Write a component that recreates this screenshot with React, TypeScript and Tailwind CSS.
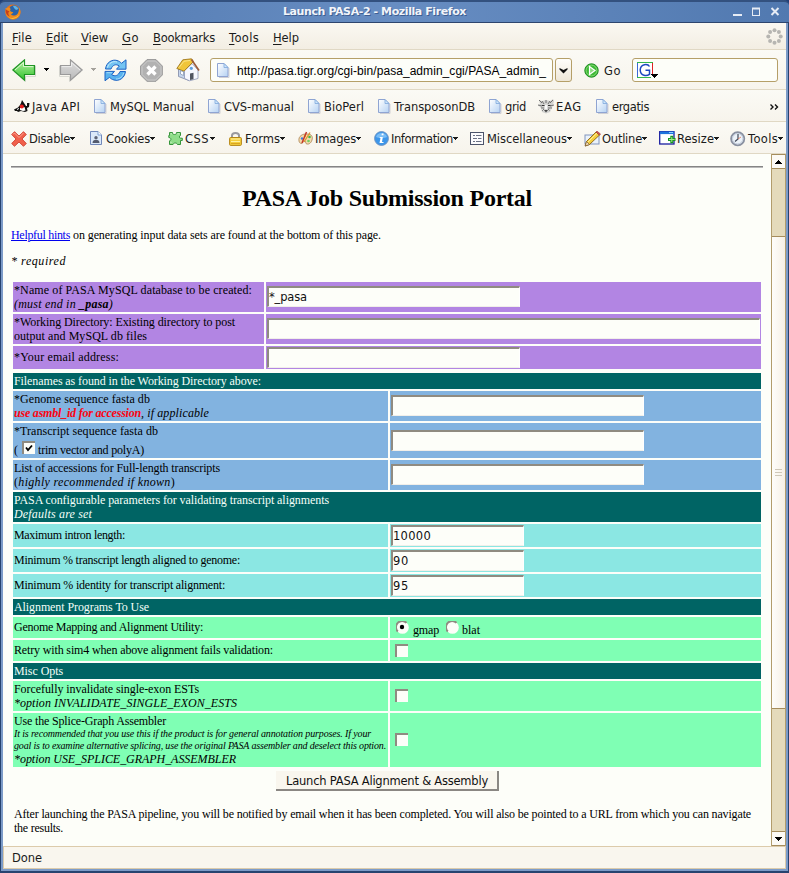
import { useLayoutEffect, useRef, type ReactNode } from "react";

/* Text set to the width of its box: the letter spacing is measured after layout. */
function Fit({ className = "", textClass = "", children }: { className?: string; textClass?: string; children: ReactNode }) {
  const box = useRef<HTMLSpanElement>(null);
  const text = useRef<HTMLSpanElement>(null);
  useLayoutEffect(() => {
    const b = box.current;
    const t = text.current;
    if (!b || !t) return;
    t.style.letterSpacing = "0px";
    const n = Math.max(1, (t.textContent || "").length);
    const gap = (b.getBoundingClientRect().width - t.getBoundingClientRect().width) / n;
    t.style.letterSpacing = `${gap}px`;
  }, []);
  return (
    <span ref={box} className={`block shrink-0 whitespace-pre ${className}`}>
      <span ref={text} className={`inline-block whitespace-pre ${textClass}`}>{children}</span>
    </span>
  );
}

const Arrow = ({ className = "" }: { className?: string }) => (
  <svg className={`h-[4px] w-[6px] shrink-0 ${className}`} viewBox="0 0 6 4" shapeRendering="crispEdges">
    <path d="M0 0H5V1H4V2H3V3H2V2H1V1H0Z" fill="currentColor" />
  </svg>
);

const PageIcon = ({ className = "" }: { className?: string }) => (
  <svg className={`h-[15px] w-[13px] shrink-0 ${className}`} viewBox="0 0 13 15">
    <defs>
      <linearGradient id="pg" x1="0" y1="0" x2="1" y2="1">
        <stop offset="0" stopColor="#fff" />
        <stop offset="1" stopColor="#b5d2f3" />
      </linearGradient>
    </defs>
    <path d="M2 14.5H12V5" stroke="#cfcfd4" fill="none" />
    <path d="M.5.5H7L11 4.5V13.5H.5Z" fill="url(#pg)" stroke="#8fa4d2" />
    <path d="M7 .5V4.5H11Z" fill="#cfe6fb" stroke="#7fa8dc" strokeWidth=".8" />
  </svg>
);

const FirefoxIcon = () => (
  <svg className="h-4 w-4 shrink-0" viewBox="0 0 16 16">
    <circle cx="8" cy="8" r="7.6" fill="#e8731a" />
    <circle cx="9" cy="6.5" r="5.2" fill="#2a63a8" />
    <path d="M8 2C10 1.2 13 3 13.5 5L11 6 9 4Z" fill="#5fb3e6" />
    <path d="M.6 4C1.8 4.6 3 3.2 4.2 3.6 5.5 4 6 5.5 5 6.5 5.4 7.8 7 8 8.3 8.2 7.4 10 5.5 10.2 6.4 11 9.5 12.8 13 11 13.6 7.5L14.3 3.8C16.5 7.5 15.6 13 10.6 15 5.5 16.4.6 13 .4 8Z" fill="#ee8a1d" />
    <path d="M3 12.5C6 15 11 14.6 14 10.5 12.5 14.5 6.8 16.5 3 12.5Z" fill="#fbd34a" />
    <path d="M.8 5C1.8 6.5 3 7 4.5 7 2.8 8.5 3 11 5 12.5 1 11.5.4 8 .8 5Z" fill="#c8401a" />
  </svg>
);

const BigArrow = ({ green }: { green: boolean }) => (
  <svg className={green ? "h-[23px] w-[24px] shrink-0" : "h-[23px] w-[24px] shrink-0 -scale-x-100"} viewBox="0 0 24 23">
    <defs>
      <linearGradient id="gr" x1="0" y1="0" x2="0" y2="1">
        <stop offset="0" stopColor="#b9f0a4" />
        <stop offset="1" stopColor="#2fc32a" />
      </linearGradient>
      <linearGradient id="gy" x1="0" y1="0" x2="0" y2="1">
        <stop offset="0" stopColor="#dedede" />
        <stop offset="1" stopColor="#b9b9b9" />
      </linearGradient>
    </defs>
    <path d="M2 12.5 13.5 22.5V17.5H23.5V7" fill="none" stroke="#d9d9d2" />
    <path d="M.8 11 12.5.9V6.5H22.5V15.5H12.5V21.1Z" fill={green ? "url(#gr)" : "url(#gy)"} stroke={green ? "#1f9424" : "#9a9a9a"} strokeWidth="1.2" />
    <path d="M3 11 11.5 3.5V7.6H21.3" fill="none" stroke={green ? "#dcf8cf" : "#ededed"} />
  </svg>
);

const ReloadIcon = () => (
  <svg className="h-[23px] w-[23px] shrink-0" viewBox="0 0 23 23">
    <path d="M1.5 10C2.2 3.500 8 0 13 1.500 15 2.100 16.500 3 17.500 4.300L22 .8V10.200H12.500L15.300 7C12 4.500 8.500 6 7 10Z" fill="#74c4f2" stroke="#1d63c4" />
    <path d="M21.5 12.500C20.800 19 15 22.500 10 21 8 20.400 6.500 19.600 5.500 18.300L1 21.800V12.400H10.500L7.700 15.600C11 18 14.500 16.500 16 12.500Z" fill="#58b2ee" stroke="#1d63c4" />
    <path d="M3.500 8.500C4.500 4 9 1.800 13 3" fill="none" stroke="#c8edff" />
    <path d="M2.500 13.700H8M12 20C16 20 19 17.500 19.600 13.800" fill="none" stroke="#a8ddfb" />
  </svg>
);

const StopIcon = () => (
  <svg className="h-[23px] w-[23px] shrink-0" viewBox="0 0 23 23">
    <path d="M7 .6H16L22.300 7V16L16 22.300H7L.6 16V7Z" fill="#b2b2b2" stroke="#989898" />
    <path d="M7.500 2H15.500L21 7.500V15.500L15.500 21H7.500L2 15.500V7.500Z" fill="none" stroke="#cbcbcb" />
    <path d="M7.500 7.500 15.500 15.500M15.500 7.500 7.500 15.500" stroke="#fff" strokeWidth="3.400" />
  </svg>
);

const HomeIcon = () => (
  <svg className="h-[24px] w-[24px] shrink-0" viewBox="0 0 24 24">
    <path d="M2.500 11 9 4 15 20.500 13 22.500 2.500 18.500Z" fill="#c6d5ec" stroke="#7d88a4" strokeWidth=".8" />
    <path d="M8.500 12.500 16 5.500 22 12V20.500L13.500 22.800 8.500 20.500Z" fill="#f6f7fd" stroke="#8c94b4" strokeWidth=".8" />
    <path d="M.8 10.500 6.800 1.800 15.500.8 17.500 3.500 8 13.200Z" fill="#f0c53a" stroke="#966c12" strokeWidth=".8" />
    <path d="M15.500 1.500 23 12.500" stroke="#9b5a3a" strokeWidth="1.600" />
    <path d="M3 9.500 8 3.200 14 2.500" fill="none" stroke="#fbe588" />
    <path d="M14 22V15.500L17.500 14.800V21.300Z" fill="#50545f" />
    <circle cx="15.300" cy="10.300" r="1.600" fill="#5fa0de" />
    <path d="M4.500 16V12.500L7.500 14V17.500Z" fill="#fff" stroke="#7c90b0" strokeWidth=".7" />
  </svg>
);

const GoIcon = () => (
  <svg className="h-[15px] w-[15px] shrink-0" viewBox="0 0 15 15">
    <circle cx="7.500" cy="7.500" r="6.700" fill="#3fba37" stroke="#1e8a22" />
    <circle cx="7.500" cy="7.500" r="5.400" fill="none" stroke="#8fe07d" strokeWidth=".8" />
    <path d="M5.500 3.500 11 7.500 5.500 11.500Z" fill="#8ed880" stroke="#fff" strokeWidth="1.200" />
  </svg>
);

const GoogleIcon = () => (
  <svg className="h-[18px] w-[22px] shrink-0" viewBox="0 0 22 18">
    <rect x="1" y="1" width="14" height="15" fill="#fff" />
    <path d="M.5 16V1" fill="none" stroke="#3c69d6" />
    <path d="M0 1.500H16" stroke="#35b84b" />
    <path d="M15.500 2V13" stroke="#e02222" />
    <path d="M0 16.500H14" stroke="#35b84b" />
    <path d="M12.500 5.500C11 2.800 3.500 2.300 3.200 9 3.500 15.500 10 15 12.500 13.300V9.300H8.500" fill="none" stroke="#1c48c0" strokeWidth="1.500" />
    <path d="M14 13H21V14H20V15H19V16H18V17H17V16H16V15H15V14H14Z" fill="#000" />
  </svg>
);

const DukeIcon = () => (
  <svg className="h-[14px] w-[16px] shrink-0" viewBox="0 0 16 14">
    <path d="M8 0 10 3 12 6 13 6 13 3 15.500 3 15 7 13 8 13.500 11 11 12 7 11 4 12 3 11H1L0 9.500 4 7.500 6 5 7 3Z" fill="#111" />
    <path d="M6 8 10.500 7 11.500 10.500 9 11 6 10Z" fill="#fff" />
    <circle cx="7.800" cy="6.500" r="2" fill="#e81e1e" />
    <path d="M3 9.500 5 8.500" stroke="#fff" />
  </svg>
);

const TigerIcon = () => (
  <svg className="h-[15px] w-[17px] shrink-0" viewBox="0 0 17 15">
    <path d="M1 1 4 2 8 1 12 2 15 0 16 2 15 6 14 9 12 13 8 14.500 4 13 3 9 0 6 2 5Z" fill="#d2d2d0" />
    <path d="M1 1 4 4M4 2 6 5M8 1V4M12 2 10 5M15 1 12 4M0 6 4 7M16 6 12 7M3 9 6 9M14 9 10 9M4 12 6 10M12 12 10 10" stroke="#666" strokeWidth=".9" />
    <path d="M6 11H10L8 13.500Z" fill="#444" />
    <path d="M7 6 9 6 9 10H7ZM4 9.500 5.500 12M11.500 12 12.800 9.500" fill="#fff" stroke="#eee" strokeWidth=".5" />
    <path d="M4 6.500H6.500M10 6.500H12.500" stroke="#333" />
  </svg>
);

const DisableIcon = () => (
  <svg className="h-[16px] w-[16px] shrink-0" viewBox="0 0 16 16">
    <path d="M3.500.7 8 5 12.500.7 15.300 3.500 11 8 15.300 12.500 12.500 15.300 8 11 3.500 15.300.7 12.500 5 8 .7 3.500Z" fill="#f0604c" stroke="#cf4031" strokeWidth=".9" />
    <path d="M2 3.500 3.500 2 8 6.500 12.500 2" fill="none" stroke="#fca493" />
  </svg>
);

const CookieIcon = () => (
  <svg className="h-[15px] w-[13px] shrink-0" viewBox="0 0 13 15">
    <path d="M.5.5H8L11.500 4V13.500H.5Z" fill="#dce9f9" stroke="#7188ba" />
    <path d="M8 .5V4H11.500" fill="#fff" stroke="#7fa0d0" />
    <circle cx="6" cy="6.800" r="1.700" fill="#5d6375" />
    <path d="M2.500 12C2.500 9.500 4 9 6 9S9.500 9.500 9.500 12Z" fill="#545b6e" />
  </svg>
);

const PuzzleIcon = () => (
  <svg className="h-[15px] w-[15px] shrink-0" viewBox="0 0 15 15">
    <path d="M1.500 1.500H4.500C4.500 3 5 3.500 6.500 3.500S8.500 3 8.500 1.500H12.500V4.500C11 4.800 11 7 12.500 7.200H14.300V9.500H12.500V13.500H9.500C9 11.500 5.500 11.500 5 13.500H1.500V9.800C3.500 9.800 3.500 6.500.8 6.500V4.500H1.500Z" fill="#8fdd8a" stroke="#35943a" />
    <path d="M2.700 2.800H4M9.500 2.800H11.500M3 12V10.800" stroke="#cdf5c7" />
  </svg>
);

const LockIcon = () => (
  <svg className="h-[15px] w-[13px] shrink-0" viewBox="0 0 13 15">
    <path d="M3 7V4.500C3 1 10 1 10 4.500V7" fill="none" stroke="#9a9a9e" strokeWidth="2" />
    <rect x=".6" y="6.500" width="11.800" height="7.900" rx="1" fill="#f4cf3d" stroke="#b58616" />
    <path d="M2 8H11M2 10.500H11" stroke="#fff2a4" />
    <path d="M2 12.500H11" stroke="#dba521" />
  </svg>
);

const PaletteIcon = () => (
  <svg className="h-[15px] w-[15px] shrink-0" viewBox="0 0 15 15">
    <path d="M1 10C0 5 5 2.500 9 3 14 3 15 6 14 9 13 12.500 10 14 8 12.500 7 11.500 8.500 10.500 7 10 5 9.500 5 13 3 12.500 2 12 1.200 11.500 1 10Z" fill="#f4dcae" stroke="#aa8152" strokeWidth=".8" />
    <circle cx="4" cy="7.500" r="1.200" fill="#3b7be0" />
    <circle cx="7" cy="5" r="1.200" fill="#e4cf30" />
    <circle cx="11.500" cy="6" r="1.300" fill="#43b547" />
    <circle cx="10.500" cy="10" r="1.300" fill="#6fcf60" />
    <path d="M4 12 8.500 1" stroke="#c5352a" strokeWidth="1.500" />
    <path d="M6 11 12 1.500" stroke="#db9830" strokeWidth="1.300" />
  </svg>
);

const InfoIcon = () => (
  <svg className="h-[15px] w-[15px] shrink-0" viewBox="0 0 15 15">
    <circle cx="7.500" cy="7.500" r="6.900" fill="#3c96ea" stroke="#6d94c4" />
    <path d="M2 6C3 .8 12 .8 13 6 10 7.500 5 7.500 2 6Z" fill="#79bdf6" />
    <path d="M7.800 2.500H9.500V4.300H7.500ZM6 6H8.800L8 11H9.500V12H5.500L6.500 7H5.500Z" fill="#fff" />
  </svg>
);

const MiscIcon = () => (
  <svg className="h-[14px] w-[15px] shrink-0" viewBox="0 0 15 14">
    <rect x=".5" y=".5" width="13" height="12" fill="#fbfbfd" stroke="#4b536a" />
    <path d="M3 3.500H5M6 3.500H11.500M3 6.500H7M8 6.500H11.500M3 9.500H5M6 9.500H11.500" stroke="#6a7084" />
  </svg>
);

const OutlineIcon = () => (
  <svg className="h-[16px] w-[17px] shrink-0" viewBox="0 0 17 16">
    <rect x="1" y="4" width="14" height="9" fill="#eaf2fb" stroke="#8195bd" />
    <path d="M1.200 15 2.500 10.500 12 1 15.500 4 5.500 13.500Z" fill="#f4ce3d" stroke="#8a6113" strokeWidth=".9" />
    <path d="M1.200 15 2.500 10.500 5.500 13.500Z" fill="#f7dfba" stroke="#76582e" strokeWidth=".7" />
    <path d="M12 1 13 .2 16.500 3 15.500 4Z" fill="#df5a55" stroke="#a23434" strokeWidth=".7" />
    <path d="M4 11 13 2.200" stroke="#fff0a0" />
  </svg>
);

const ResizeIcon = () => (
  <svg className="h-[15px] w-[17px] shrink-0" viewBox="0 0 17 15">
    <rect x=".7" y=".7" width="14.300" height="12.300" fill="#fff" stroke="#1a1ea0" strokeWidth="1.300" />
    <path d="M1 1.800H15" stroke="#1e73dc" strokeWidth="2.600" />
    <path d="M10 1.500H14" stroke="#8ad0ff" />
    <path d="M9 8.500H16.500M12.800 4.800V12.300" stroke="#189522" strokeWidth="3" />
    <path d="M10 8.500H15.500M12.800 6V11" stroke="#a6eb8b" strokeWidth="1" />
  </svg>
);

const ClockIcon = () => (
  <svg className="h-[16px] w-[16px] shrink-0" viewBox="0 0 16 16">
    <circle cx="7.700" cy="7.700" r="6.600" fill="#edf3f9" stroke="#8990a0" strokeWidth="1.800" />
    <circle cx="7.700" cy="7.700" r="5.200" fill="none" stroke="#b8c1d3" strokeWidth=".8" />
    <path d="M8 3V8L5 10.500" fill="none" stroke="#414957" strokeWidth="1.200" />
    <path d="M8 8 11 6" stroke="#e07050" strokeWidth=".8" />
  </svg>
);

const Throbber = () => (
  <svg className="h-[17px] w-[17px] shrink-0" viewBox="0 0 17 17" fill="#b6b5b1">
    <circle cx="8.500" cy="2.300" r="2" />
    <circle cx="12.900" cy="4.100" r="2" />
    <circle cx="14.700" cy="8.500" r="2" />
    <circle cx="12.900" cy="12.900" r="2" />
    <circle cx="8.500" cy="14.700" r="2" />
    <circle cx="4.100" cy="12.900" r="2" />
    <circle cx="2.300" cy="8.500" r="2" />
    <circle cx="4.100" cy="4.100" r="2" />
  </svg>
);

const Menu = ({ k, rest, className }: { k: string; rest: string; className: string }) => (
  <Fit className={className}>
    <span className="underline underline-offset-2">{k}</span>
    {rest}
  </Fit>
);

const Field = ({ className, children }: { className: string; children?: ReactNode }) => (
  <div
    className={`box-border flex h-[21px] items-center border-t-2 border-r border-b border-l-2 border-t-[#8f8b81] border-r-white border-b-[#f1efe9] border-l-[#8f8b81] bg-[#fdfef9] font-['DejaVu_Sans',sans-serif] text-[11.5px] leading-[18px] text-[#111] ${className}`}
  >
    {children}
  </div>
);

const Check = ({ on = false, className = "" }: { on?: boolean; className?: string }) => (
  <span className={`block h-[13px] w-[13px] shrink-0 border-t-2 border-l-2 border-[#8f8b81] bg-[#fdfef9] ${className}`}>
    {on && (
      <svg className="h-[11px] w-[11px]" viewBox="0 0 11 11">
        <path d="M2 4.500 4 7 8 2.500" fill="none" stroke="#000" strokeWidth="1.800" />
      </svg>
    )}
  </span>
);

const Radio = ({ on = false }: { on?: boolean }) => (
  <svg className="h-[13px] w-[13px] shrink-0" viewBox="0 0 13 13">
    <circle cx="6.500" cy="6.500" r="6.300" fill="#fdfef9" />
    <path d="M1.800 10.500A5.700 5.700 0 0 1 10.500 1.800" fill="none" stroke="#8f8b81" strokeWidth="1.900" />
    {on && <circle cx="6" cy="6" r="2.200" fill="#000" />}
  </svg>
);

const Head = ({ className, children }: { className: string; children: ReactNode }) => (
  <div className={`bg-[#006464] px-px pt-px text-[#f4fff8] ${className}`}>{children}</div>
);

const Row = ({ className, left, right }: { className: string; left: ReactNode; right: ReactNode }) => (
  <div className="flex gap-[2px]">
    <div className={`flex w-[375px] flex-col justify-center px-px ${className}`}>{left}</div>
    <div className={`flex w-[371px] items-center px-px pb-px ${className}`}>{right}</div>
  </div>
);

const PurpleRow = ({ className, left, right }: { className: string; left: ReactNode; right: ReactNode }) => (
  <div className="flex gap-[2px]">
    <div className={`flex w-[251px] flex-col justify-center bg-[#b285e3] px-px ${className}`}>{left}</div>
    <div className={`flex w-[495px] items-center bg-[#b285e3] pb-px pl-px ${className}`}>{right}</div>
  </div>
);

export default function App() {
  return (
    <div className="flex h-[873px] w-[789px] flex-col overflow-hidden bg-[#203f78] font-['DejaVu_Sans',sans-serif] text-[11.5px] leading-[14px] text-[#1b1b1b]">
      {/* title bar */}
      <header className="box-border flex h-[23px] items-center rounded-t-[5px] border-t-2 border-b border-t-[#33517f] border-b-[#2d456e] bg-linear-to-r from-[#5179b0] via-[#678dc2] to-[#5179b0] pl-[5px] text-white">
        <FirefoxIcon />
        <Fit className="ml-[262px] w-[183px] font-['DejaVu_Sans',sans-serif] text-[11px] font-bold text-[#f2f5fa] [text-shadow:1px_1px_0_#3d5e92]">Launch PASA-2 - Mozilla Firefox</Fit>
        <svg className="ml-[265px] h-[12px] w-[50px]" viewBox="0 0 50 12">
          <path d="M2 9H11" stroke="#e6ecf5" strokeWidth="2" />
          <rect x="21.500" y="2.500" width="7" height="7" fill="none" stroke="#e6ecf5" />
          <path d="M21 2.500H29" stroke="#e6ecf5" strokeWidth="2" />
          <path d="M40.500 2 47.500 9M47.500 2 40.500 9" stroke="#e6ecf5" strokeWidth="2" />
        </svg>
      </header>

      <div className="box-border h-[850px] border-r border-b-2 border-l border-[#27436f]">
        <div className="box-border flex h-[848px] flex-col border-r-2 border-b-2 border-l-2 border-[#7c9bc8]">
          {/* menu bar */}
          <nav className="box-border flex h-[27px] shrink-0 items-center border-b border-[#e0d8c4] bg-linear-to-b from-[#faf8f2] to-[#f3eee3] pt-[3px] pl-[9px]">
            <Menu k="F" rest="ile" className="w-[20px]" />
            <Menu k="E" rest="dit" className="ml-[14px] w-[22px]" />
            <Menu k="V" rest="iew" className="ml-[13px] w-[27px]" />
            <Menu k="G" rest="o" className="ml-[14px] w-[17px]" />
            <Menu k="B" rest="ookmarks" className="ml-[14px] w-[62px]" />
            <Menu k="T" rest="ools" className="ml-[14px] w-[30px]" />
            <Menu k="H" rest="elp" className="ml-[14px] w-[26px]" />
            <div className="grow" />
            <div className="mr-[3px] mb-[3px]"><Throbber /></div>
          </nav>

          {/* navigation bar */}
          <div className="box-border flex h-[40px] shrink-0 items-center border-b border-[#e0d8c4] bg-linear-to-b from-[#fbfaf5] to-[#f7f4ec] pt-px pl-[9px]">
            <BigArrow green />
            <Arrow className="ml-[8px] text-black" />
            <span className="ml-[9px] flex"><BigArrow green={false} /></span>
            <Arrow className="ml-[8px] text-[#a5a29c]" />
            <span className="ml-[7px] flex"><ReloadIcon /></span>
            <span className="ml-[13px] flex"><StopIcon /></span>
            <span className="ml-[13px] flex"><HomeIcon /></span>
            <div className="ml-[10px] box-border flex h-[24px] w-[343px] items-center rounded-[3px] border border-[#b59f68] bg-[#fdfef9] pl-[6px]">
              <PageIcon />
              <Fit className="ml-[7px] w-[309px] pt-[2px] font-['Liberation_Sans',sans-serif] text-[12px] text-black">http://pasa.tigr.org/cgi-bin/pasa_admin_cgi/PASA_admin_</Fit>
            </div>
            <div className="ml-[2px] box-border flex h-[24px] w-[17px] items-center justify-center rounded-[3px] border border-[#b59f68] bg-linear-to-b from-[#fffefb] to-[#eee7d8]">
              <svg className="h-[7px] w-[9px]" viewBox="0 0 9 7"><path d="M.5 1 4.500 3 8.500 1V2.500L4.500 6.500.5 2.500Z" fill="#111" /></svg>
            </div>
            <span className="ml-[12px] flex"><GoIcon /></span>
            <Fit className="ml-[5px] w-[17px] pt-[2px]">Go</Fit>
            <div className="ml-[11px] box-border flex h-[24px] w-[146px] items-center rounded-[3px] border border-[#b59f68] bg-[#fdfef9] pl-[4px]">
              <GoogleIcon />
            </div>
          </div>

          {/* bookmarks bar */}
          <div className="box-border flex h-[32px] shrink-0 items-center border-b border-[#e0d8c4] bg-linear-to-b from-[#fbfaf5] to-[#f7f4ec] pt-[2px] pl-[11px]">
            <DukeIcon />
            <Fit className="ml-[2px] w-[48px] pt-px">Java API</Fit>
            <PageIcon className="ml-[14px]" />
            <Fit className="ml-[3px] w-[84px] pt-px">MySQL Manual</Fit>
            <PageIcon className="ml-[14px]" />
            <Fit className="ml-[3px] w-[70px] pt-px">CVS-manual</Fit>
            <PageIcon className="ml-[14px]" />
            <Fit className="ml-[3px] w-[40px] pt-px">BioPerl</Fit>
            <PageIcon className="ml-[14px]" />
            <Fit className="ml-[3px] w-[81px] pt-px">TransposonDB</Fit>
            <PageIcon className="ml-[14px]" />
            <Fit className="ml-[3px] w-[21px] pt-px">grid</Fit>
            <span className="ml-[12px] flex"><TigerIcon /></span>
            <Fit className="ml-px w-[26px] pt-px">EAG</Fit>
            <PageIcon className="ml-[14px]" />
            <Fit className="ml-[3px] w-[37px] pt-px">ergatis</Fit>
            <svg className="ml-[121px] h-[6px] w-[9px]" viewBox="0 0 9 6"><path d="M.5.5 3 3 .5 5.500M5 .5 7.500 3 5 5.500" fill="none" stroke="#111" strokeWidth="1.400" /></svg>
          </div>

          {/* developer bar */}
          <div className="box-border flex h-[32px] shrink-0 items-center border-b border-[#e0d8c4] bg-linear-to-b from-[#fbfaf5] to-[#f7f4ec] pt-[2px] pl-[8px]">
            <DisableIcon />
            <Fit className="ml-[2px] w-[41px] pt-px">Disable</Fit>
            <Arrow />
            <span className="ml-[14px] flex"><CookieIcon /></span>
            <Fit className="ml-[3px] w-[44px] pt-px">Cookies</Fit>
            <Arrow />
            <span className="ml-[12px] flex"><PuzzleIcon /></span>
            <Fit className="ml-[2px] w-[24px] pt-px">CSS</Fit>
            <Arrow className="ml-px" />
            <span className="ml-[13px] flex"><LockIcon /></span>
            <Fit className="ml-[3px] w-[35px] pt-px">Forms</Fit>
            <Arrow />
            <span className="ml-[12px] flex"><PaletteIcon /></span>
            <Fit className="ml-[2px] w-[41px] pt-px">Images</Fit>
            <Arrow />
            <span className="ml-[12px] flex"><InfoIcon /></span>
            <Fit className="ml-[2px] w-[62px] pt-px">Information</Fit>
            <Arrow />
            <span className="ml-[11px] flex"><MiscIcon /></span>
            <Fit className="ml-[2px] w-[80px] pt-px">Miscellaneous</Fit>
            <Arrow />
            <span className="ml-[11px] flex"><OutlineIcon /></span>
            <Fit className="ml-px w-[40px] pt-px">Outline</Fit>
            <Arrow />
            <span className="ml-[11px] flex"><ResizeIcon /></span>
            <Fit className="ml-px w-[37px] pt-px">Resize</Fit>
            <Arrow />
            <span className="ml-[10px] flex"><ClockIcon /></span>
            <Fit className="ml-[2px] w-[30px] pt-px">Tools</Fit>
            <Arrow />
          </div>

          <div className="flex h-[692px] shrink-0 bg-[#fdfef9]">
            {/* page */}
            <main className="box-border h-[692px] w-[768px] overflow-hidden pt-[12px] pl-[8px] font-['Liberation_Serif',serif] text-[12px] leading-[14px] text-black">
              <div className="h-[2px] w-[752px] border-t border-b border-t-[#858585] border-b-[#b9b9b9]" />
              <h1 className="mt-[16px] ml-[231px] text-[24px] leading-[28px] font-bold">
                <Fit className="w-[290px]">PASA Job Submission Portal</Fit>
              </h1>
              <p className="mt-[16px] flex">
                <Fit className="w-[59px] text-[#0000ee]" textClass="underline underline-offset-1">Helpful hints</Fit>
                <Fit className="ml-[3px] w-[308px]">on generating input data sets are found at the bottom of this page.</Fit>
              </p>
              <p className="mt-[12px] italic"><Fit className="w-[55px]">* required</Fit></p>

              <section className="mt-[14px] ml-[2px] flex w-[748px] flex-col gap-[2px]">
                <PurpleRow
                  className="h-[30px]"
                  left={<>
                    <Fit className="w-[238px]">*Name of PASA MySQL database to be created:</Fit>
                    <Fit className="w-[99px] italic">(must end in <b>_pasa</b>)</Fit>
                  </>}
                  right={<Field className="w-[253px]"><Fit className="w-[38px]">*_pasa</Fit></Field>}
                />
                <PurpleRow
                  className="h-[30px]"
                  left={<>
                    <Fit className="w-[221px]">*Working Directory: Existing directory to post</Fit>
                    <Fit className="w-[133px]">output and MySQL db files</Fit>
                  </>}
                  right={<Field className="w-[493px]" />}
                />
                <PurpleRow
                  className="h-[23px]"
                  left={<Fit className="-mt-px w-[105px]">*Your email address:</Fit>}
                  right={<Field className="w-[253px]" />}
                />
              </section>

              <section className="mt-[4px] ml-[2px] flex w-[748px] flex-col gap-[2px]">
                <Head className="h-[16px]"><Fit className="w-[247px]">Filenames as found in the Working Directory above:</Fit></Head>
                <Row
                  className="h-[30px] bg-[#82b3e0]"
                  left={<>
                    <Fit className="w-[136px]">*Genome sequence fasta db</Fit>
                    <span className="flex italic">
                      <Fit className="w-[127px] font-bold text-[#fb0310]">use asmbl_id for accession</Fit>
                      <Fit className="w-[68px]">, if applicable</Fit>
                    </span>
                  </>}
                  right={<Field className="w-[253px]" />}
                />
                <Row
                  className="h-[35px] bg-[#82b3e0]"
                  left={<>
                    <Fit className="w-[144px]">*Transcript sequence fasta db</Fit>
                    <span className="mt-[3px] flex h-[16px] items-start">
                      <span className="w-[8px] pt-[2px]">(</span>
                      <Check on />
                      <Fit className="ml-[3px] w-[106px] pt-[2px]">trim vector and polyA)</Fit>
                    </span>
                  </>}
                  right={<Field className="w-[253px]" />}
                />
                <Row
                  className="h-[30px] bg-[#82b3e0]"
                  left={<>
                    <Fit className="w-[206px]">List of accessions for Full-length transcripts</Fit>
                    <Fit className="w-[161px]">(<i>highly recommended if known</i>)</Fit>
                  </>}
                  right={<Field className="w-[253px]" />}
                />
                <Head className="h-[30px]">
                  <Fit className="w-[315px]">PASA configurable parameters for validating transcript alignments</Fit>
                  <Fit className="w-[78px] italic">Defaults are set</Fit>
                </Head>
                <Row
                  className="h-[23px] bg-[#8be7e3]"
                  left={<Fit className="-mt-px w-[111px]">Maximum intron length:</Fit>}
                  right={<Field className="w-[133px]"><Fit className="w-[38px] pt-px">10000</Fit></Field>}
                />
                <Row
                  className="h-[23px] bg-[#8be7e3]"
                  left={<Fit className="-mt-px w-[226px]">Minimum % transcript length aligned to genome:</Fit>}
                  right={<Field className="w-[133px]"><Fit className="w-[16px] pt-px">90</Fit></Field>}
                />
                <Row
                  className="h-[23px] bg-[#8be7e3]"
                  left={<Fit className="-mt-px w-[211px]">Minimum % identity for transcript alignment:</Fit>}
                  right={<Field className="w-[133px]"><Fit className="w-[16px] pt-px">95</Fit></Field>}
                />
                <Head className="h-[16px]"><Fit className="w-[135px]">Alignment Programs To Use</Fit></Head>
                <Row
                  className="h-[21px] bg-[#7fffb4]"
                  left={<Fit className="-mt-px w-[189px]">Genome Mapping and Alignment Utility:</Fit>}
                  right={<span className="mt-px ml-[5px] flex items-center">
                    <Radio on />
                    <Fit className="mt-[4px] ml-[4px] w-[26px]">gmap</Fit>
                    <span className="ml-[7px] flex"><Radio /></span>
                    <Fit className="mt-[4px] ml-[3px] w-[18px]">blat</Fit>
                  </span>}
                />
                <Row
                  className="h-[21px] bg-[#7fffb4]"
                  left={<Fit className="-mt-px w-[259px]">Retry with sim4 when above alignment fails validation:</Fit>}
                  right={<Check className="ml-[4px]" />}
                />
                <Head className="h-[16px]"><Fit className="w-[49px]">Misc Opts</Fit></Head>
                <Row
                  className="h-[30px] bg-[#7fffb4]"
                  left={<>
                    <Fit className="w-[185px]">Forcefully invalidate single-exon ESTs</Fit>
                    <Fit className="w-[223px] italic">*option INVALIDATE_SINGLE_EXON_ESTS</Fit>
                  </>}
                  right={<Check className="ml-[4px]" />}
                />
                <Row
                  className="h-[54px] bg-[#7fffb4]"
                  left={<>
                    <Fit className="w-[152px]">Use the Splice-Graph Assembler</Fit>
                    <Fit className="w-[357px] text-[10px] leading-[12px] italic">It is recommended that you use this if the product is for general annotation purposes. If your</Fit>
                    <Fit className="w-[372px] text-[10px] leading-[12px] italic">goal is to examine alternative splicing, use the original PASA assembler and deselect this option.</Fit>
                    <Fit className="w-[222px] italic">*option USE_SPLICE_GRAPH_ASSEMBLER</Fit>
                  </>}
                  right={<Check className="ml-[4px]" />}
                />
              </section>

              <button className="mt-[4px] ml-[265px] box-border flex h-[20px] w-[223px] items-center border-r-2 border-b-2 border-[#8a8783] bg-[#f9f6ee] pt-[2px] pl-[10px] font-['DejaVu_Sans',sans-serif] text-[11.5px] leading-[14px] text-[#111]">
                <Fit className="w-[202px] text-left">Launch PASA Alignment &amp; Assembly</Fit>
              </button>
              <p className="mt-[16px] ml-[3px]">
                <Fit className="w-[737px]">After launching the PASA pipeline, you will be notified by email when it has been completed. You will also be pointed to a URL from which you can navigate</Fit>
                <Fit className="w-[49px]">the results.</Fit>
              </p>
            </main>

            {/* scrollbar */}
            <aside className="flex h-[692px] w-[15px] flex-col border-r border-l border-[#b29c6c] bg-[#e4dabb]">
              <div className="flex h-[15px] items-center justify-center border-t border-b border-[#a58c5c] bg-[#fcfaf5]">
                <svg className="h-[4px] w-[7px]" viewBox="0 0 7 4" shapeRendering="crispEdges"><path d="M3 0H4V1H5V2H6V3H7V4H0V3H1V2H2V1H3Z" /></svg>
              </div>
              <div className="mt-[67px] flex h-[473px] flex-col items-center justify-center gap-[2px] border-t border-b border-[#a58c5c] bg-linear-to-r from-[#fefdfb] to-[#f6f0e5]">
                <div className="h-px w-[7px] bg-[#cfc8b8]" />
                <div className="h-px w-[7px] bg-[#cfc8b8]" />
                <div className="h-px w-[7px] bg-[#cfc8b8]" />
              </div>
              <div className="mt-[122px] flex h-[15px] items-center justify-center border-t border-b border-[#a58c5c] bg-[#fcfaf5]">
                <svg className="h-[4px] w-[7px]" viewBox="0 0 7 4" shapeRendering="crispEdges"><path d="M0 0H7V1H6V2H5V3H4V4H3V3H2V2H1V1H0Z" /></svg>
              </div>
            </aside>
          </div>

          {/* status bar */}
          <footer className="box-border flex h-[23px] shrink-0 items-center border border-[#dccbab] bg-[#f9f6ee] pt-px pl-[8px]">
            <Fit className="w-[30px]">Done</Fit>
          </footer>
        </div>
      </div>
    </div>
  );
}
